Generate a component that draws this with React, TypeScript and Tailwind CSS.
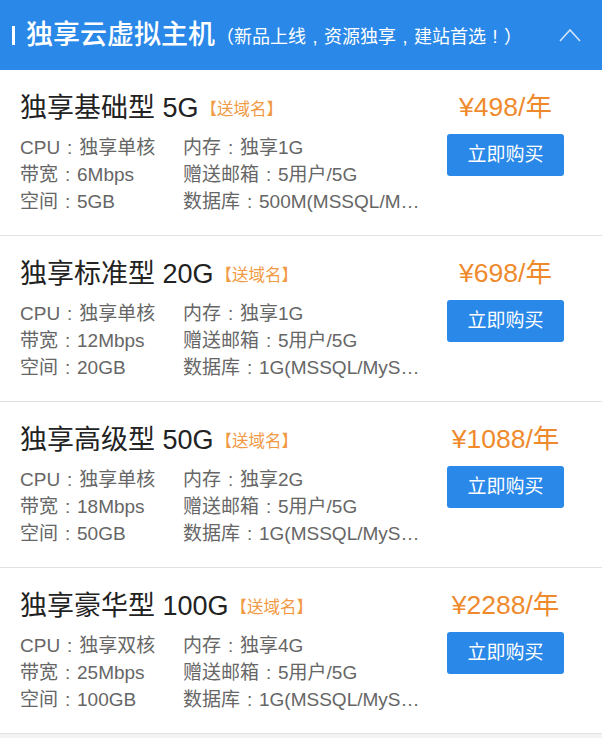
import React from 'react';

type Plan = {
  name: string;
  size: string;
  price: string;
  cpu: string;
  ram: string;
  bandwidth: string;
  mail: string;
  disk: string;
  db: string;
};

const plans: Plan[] = [
  { name: '独享基础型', size: '5G', price: '¥498/年', cpu: '独享单核', ram: '独享1G', bandwidth: '6Mbps', mail: '5用户/5G', disk: '5GB', db: '500M(MSSQL/MySQL)' },
  { name: '独享标准型', size: '20G', price: '¥698/年', cpu: '独享单核', ram: '独享1G', bandwidth: '12Mbps', mail: '5用户/5G', disk: '20GB', db: '1G(MSSQL/MySQL)' },
  { name: '独享高级型', size: '50G', price: '¥1088/年', cpu: '独享单核', ram: '独享2G', bandwidth: '18Mbps', mail: '5用户/5G', disk: '50GB', db: '1G(MSSQL/MySQL)' },
  { name: '独享豪华型', size: '100G', price: '¥2288/年', cpu: '独享双核', ram: '独享4G', bandwidth: '25Mbps', mail: '5用户/5G', disk: '100GB', db: '1G(MSSQL/MySQL)' },
];

const font = { fontFamily: '"Liberation Sans", "Noto Sans CJK SC", sans-serif' };

// full-width punctuation drawn centred, like the YaHei glyphs in the design
const Mid: React.FC<{ c: string }> = ({ c }) => (
  <span className="inline-block w-[1em] text-center">{c}</span>
);

const App: React.FC = () => (
  <div className="w-[602px] min-h-[738px] bg-[#f3f3f3]" style={font}>
    <header className="h-[70px] bg-[#2a88e8] flex items-center pl-[12px] pr-[20px] text-white">
      <span className="w-[3px] h-[19px] bg-white mr-[11px]" />
      <h1 className="text-[27px] leading-none font-medium">独享云虚拟主机</h1>
      <span className="text-[18px] leading-none ml-[1px] mt-[3px] whitespace-nowrap">
        （新品上线<Mid c="," />资源独享<Mid c="," />建站首选<Mid c="!" />）
      </span>
      <svg className="ml-auto" width="24" height="14" viewBox="0 0 24 14" fill="none">
        <path d="M2 13 L12 2 L22 13" stroke="#cfe4fb" strokeWidth="1.6" />
      </svg>
    </header>

    {plans.map((p) => <PlanCard key={p.name} plan={p} />)}
  </div>
);

const Row: React.FC<{ label: string; value: string; cut?: boolean }> = ({ label, value, cut }) => (
  <span className={cut ? 'truncate' : 'whitespace-nowrap'}>
    {label}<Mid c=":" />{value}
  </span>
);

const PlanCard: React.FC<{ plan: Plan }> = ({ plan }) => (
  <div className="bg-white border-b border-[#e2e2e2] flex pl-[20px] pr-[38px] pt-[20px] pb-[20px]">
    <div className="flex-1 min-w-0">
      <div className="h-[36px] flex items-center">
        <span className="text-[27px] text-[#222]">{plan.name} {plan.size}</span>
        <span className="text-[16.5px] text-[#f19a45] ml-[2px] mt-[3px]">【送域名】</span>
      </div>
      <div className="mt-[8px] grid grid-cols-[163px_242px] text-[19px] leading-[27px] text-[#666]">
        <Row label="CPU" value={plan.cpu} />
        <Row label="内存" value={plan.ram} />
        <Row label="带宽" value={plan.bandwidth} />
        <Row label="赠送邮箱" value={plan.mail} />
        <Row label="空间" value={plan.disk} />
        <Row label="数据库" value={plan.db} cut />
      </div>
    </div>
    <div className="w-[117px] flex flex-col items-center">
      <div className="h-[36px] flex items-center text-[26.5px] text-[#ef8a2c] whitespace-nowrap">{plan.price}</div>
      <button className="mt-[8px] w-[117px] h-[42px] rounded-[3px] bg-[#2a88e8] text-white text-[19px]">立即购买</button>
    </div>
  </div>
);

export default App;
